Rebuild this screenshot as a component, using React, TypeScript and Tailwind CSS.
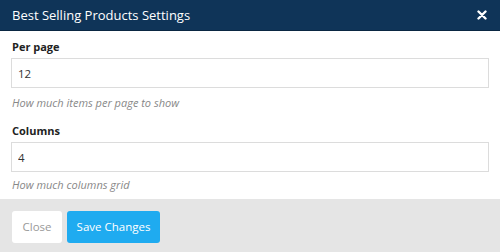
import React, { useState } from "react";

const font = { fontFamily: '"Open Sans", "Liberation Sans", sans-serif' };

export default function App() {
  const [perPage, setPerPage] = useState("12");
  const [columns, setColumns] = useState("4");

  return (
    <div className="w-[500px] h-[252px] bg-white flex flex-col" style={font}>
      <div className="h-[31px] shrink-0 bg-[#0f3458] border-b border-[#0a2742] flex items-center justify-between pl-3 pr-[13px]">
        <h2 className="text-[13px] font-medium text-white leading-[15px]">Best Selling Products Settings</h2>
        <button className="text-white">
          <svg width="10" height="10" viewBox="0 0 10 10">
            <path d="M1.5 1.5 L8.5 8.5 M8.5 1.5 L1.5 8.5" stroke="currentColor" strokeWidth="2.4" strokeLinecap="round" />
          </svg>
        </button>
      </div>

      <div className="flex-1 px-[11px] pt-[8px]">
        <label className="block pl-px text-[11px] font-bold text-[#222] leading-[15px]">Per page</label>
        <input
          value={perPage}
          onChange={(e) => setPerPage(e.target.value)}
          className="mt-[4px] block w-full h-[30px] border border-[#dcdcdc] px-[6px] text-[11.5px] text-[#333] outline-none"
        />
        <p className="mt-[7px] pl-px text-[11px] italic text-[#888] leading-[15px]">How much items per page to show</p>

        <label className="mt-[13px] block pl-px text-[11px] font-bold text-[#222] leading-[15px]">Columns</label>
        <input
          value={columns}
          onChange={(e) => setColumns(e.target.value)}
          className="mt-[4px] block w-full h-[30px] border border-[#dcdcdc] px-[6px] text-[11.5px] text-[#333] outline-none"
        />
        <p className="mt-[5px] pl-px text-[11px] italic text-[#888] leading-[15px]">How much columns grid</p>
      </div>

      <div className="h-[53px] shrink-0 bg-[#e5e5e5] flex items-start gap-[5px] px-3 pt-[12px]">
        <button className="h-[32px] w-[50px] bg-white rounded-[3px] text-[11.5px] text-[#999]">Close</button>
        <button className="h-[32px] w-[93px] bg-[#1fabf0] rounded-[3px] text-[11.5px] text-white">Save Changes</button>
      </div>
    </div>
  );
}
